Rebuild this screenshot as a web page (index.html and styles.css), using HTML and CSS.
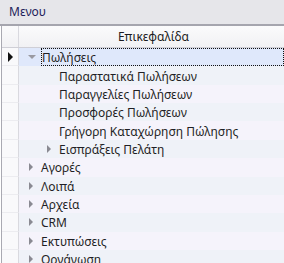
FILE: index.html
```html
<!DOCTYPE html>
<html lang="el">
<head>
<meta charset="utf-8">
<link rel="stylesheet" href="styles.css">
</head>
<body>
<div class="panel">
  <div class="titlebar">Μενου</div>
  <div class="grid">
    <div class="row header">
      <div class="ind"></div>
      <div class="cell head-cell">Επικεφαλίδα</div>
    </div>
    <div class="row sel">
      <div class="ind"><span class="focus-arrow"></span></div>
      <div class="cell lvl0"><span class="exp open"></span><span class="text focus">Πωλήσεις</span></div>
    </div>
    <div class="row b"><div class="ind"></div><div class="cell lvl1"><span class="exp none"></span><span class="text">Παραστατικά Πωλήσεων</span></div></div>
    <div class="row a"><div class="ind"></div><div class="cell lvl1"><span class="exp none"></span><span class="text">Παραγγελίες Πωλήσεων</span></div></div>
    <div class="row b"><div class="ind"></div><div class="cell lvl1"><span class="exp none"></span><span class="text">Προσφορές Πωλήσεων</span></div></div>
    <div class="row a"><div class="ind"></div><div class="cell lvl1"><span class="exp none"></span><span class="text">Γρήγορη Καταχώρηση Πώλησης</span></div></div>
    <div class="row b"><div class="ind"></div><div class="cell lvl1"><span class="exp"></span><span class="text">Εισπράξεις Πελάτη</span></div></div>
    <div class="row a"><div class="ind"></div><div class="cell lvl0"><span class="exp"></span><span class="text">Αγορές</span></div></div>
    <div class="row b"><div class="ind"></div><div class="cell lvl0"><span class="exp"></span><span class="text">Λοιπά</span></div></div>
    <div class="row a"><div class="ind"></div><div class="cell lvl0"><span class="exp"></span><span class="text">Αρχεία</span></div></div>
    <div class="row b"><div class="ind"></div><div class="cell lvl0"><span class="exp"></span><span class="text">CRM</span></div></div>
    <div class="row a"><div class="ind"></div><div class="cell lvl0"><span class="exp"></span><span class="text">Εκτυπώσεις</span></div></div>
    <div class="row b"><div class="ind"></div><div class="cell lvl0"><span class="exp"></span><span class="text">Οργάνωση</span></div></div>
  </div>
</div>
</body>
</html>
```
FILE: styles.css
```css
html, body {
  margin: 0;
  padding: 0;
  background: #ffffff;
}
body {
  width: 284px;
  height: 263px;
  overflow: hidden;
  font-family: "Noto Sans", "DejaVu Sans", sans-serif;
  font-size: 12px;
}
.panel {
  display: flex;
  flex-direction: column;
  height: 263px;
}
.titlebar {
  flex: none;
  height: 26px;
  line-height: 23px;
  padding-left: 9px;
  background: #e6e6ea;
  color: #1e1e5a;
  border-bottom: 2px solid #a5a5ae;
  box-sizing: border-box;
}
.grid {
  flex: 1;
  display: flex;
  flex-direction: column;
  margin-left: 1px;
  border-left: 1px solid #a9a9b2;
  overflow: hidden;
}
.row {
  display: flex;
  height: 18.36px;
  flex: none;
}
.row.header {
  height: 22px;
  background: linear-gradient(#fbfbfc, #f1f1f4);
  border-bottom: 1px solid #cfcfd6;
  box-sizing: border-box;
}
.ind {
  width: 16px;
  flex: none;
  border-right: 1px solid #d9d9df;
  background: #f9f9fb;
  display: flex;
  align-items: center;
  justify-content: center;
  box-sizing: content-box;
}
.row.header .ind {
  background: transparent;
}
.row:not(.header) .ind {
  border-bottom: 1px solid #ececf0;
  box-sizing: border-box;
  width: 17px;
}
.cell {
  flex: 1;
  display: flex;
  align-items: center;
  color: #1f1f25;
  white-space: nowrap;
}
.row:not(.header) .cell .text {
  position: relative;
  top: 1px;
}
.head-cell {
  justify-content: center;
  color: #1c1c22;
  padding-left: 4px;
}
.row.a { background: #f5f3fb; }
.row.b { background: #eff2f8; }
.row.sel { background: #dfe8fb; }
.lvl0 { padding-left: 4px; }
.lvl1 { padding-left: 22px; }
.exp {
  width: 18px;
  height: 18px;
  flex: none;
  position: relative;
}
.exp::before {
  content: "";
  position: absolute;
  left: 6px;
  top: 5px;
  border-left: 4px solid #8a8a92;
  border-top: 4px solid transparent;
  border-bottom: 4px solid transparent;
}
.exp.open::before {
  left: 5px;
  top: 7px;
  border-left: 4px solid transparent;
  border-right: 4px solid transparent;
  border-top: 4px solid #9a9aa2;
  border-bottom: 0;
}
.exp.none::before { display: none; }
.text {
  line-height: 16px;
}
.text.focus {
  flex: 1;
  align-self: stretch;
  top: 0 !important;
  display: flex;
  align-items: center;
  outline: 1px dotted #111;
  outline-offset: -1px;
  padding-left: 1px;
  padding-top: 1px;
}
.focus-arrow {
  width: 0;
  height: 0;
  border-left: 5px solid #111;
  border-top: 5px solid transparent;
  border-bottom: 5px solid transparent;
}
```
